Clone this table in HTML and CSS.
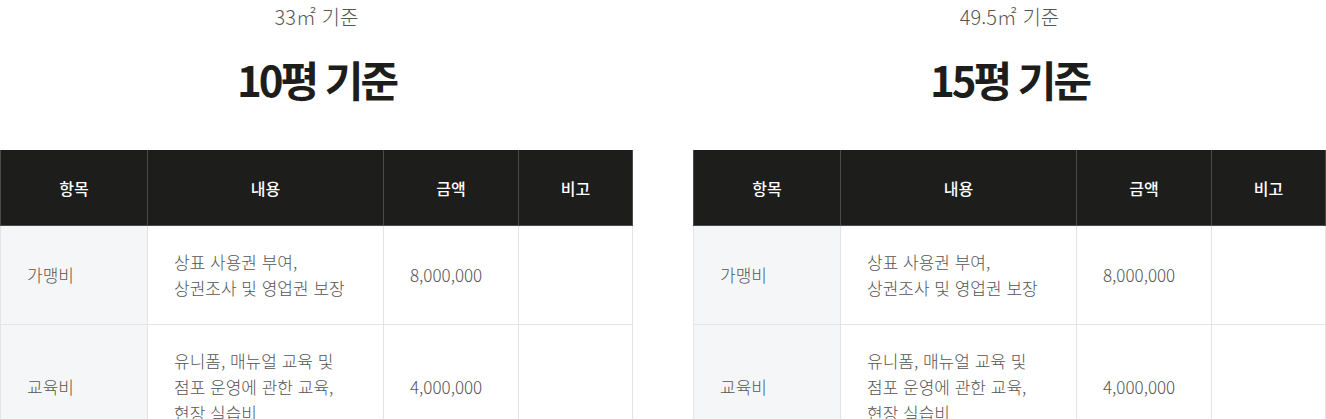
FILE: index.html
```html
<!DOCTYPE html>
<html lang="ko">
<head>
    <meta charset="utf-8">
    <title>창업비용 - 평형별 기준</title>
    <link rel="stylesheet" href="styles.css">
</head>
<body>
    <div class="cost-wrap">
        <div class="cost-box">
            <p class="sub">33㎡ 기준</p>
            <h2 class="title">10평 기준</h2>
            <table class="cost-table">
                <colgroup>
                    <col class="c-item"><col class="c-desc"><col class="c-price"><col class="c-note">
                </colgroup>
                <thead>
                    <tr><th>항목</th><th>내용</th><th>금액</th><th>비고</th></tr>
                </thead>
                <tbody>
                    <tr>
                        <td class="item">가맹비</td>
                        <td>상표 사용권 부여,<br>상권조사 및 영업권 보장</td>
                        <td>8,000,000</td>
                        <td></td>
                    </tr>
                    <tr>
                        <td class="item">교육비</td>
                        <td>유니폼, 매뉴얼 교육 및<br>점포 운영에 관한 교육,<br>현장 실습비</td>
                        <td>4,000,000</td>
                        <td></td>
                    </tr>
                </tbody>
            </table>
        </div>

        <div class="cost-box">
            <p class="sub">49.5㎡ 기준</p>
            <h2 class="title">15평 기준</h2>
            <table class="cost-table">
                <colgroup>
                    <col class="c-item"><col class="c-desc"><col class="c-price"><col class="c-note">
                </colgroup>
                <thead>
                    <tr><th>항목</th><th>내용</th><th>금액</th><th>비고</th></tr>
                </thead>
                <tbody>
                    <tr>
                        <td class="item">가맹비</td>
                        <td>상표 사용권 부여,<br>상권조사 및 영업권 보장</td>
                        <td>8,000,000</td>
                        <td></td>
                    </tr>
                    <tr>
                        <td class="item">교육비</td>
                        <td>유니폼, 매뉴얼 교육 및<br>점포 운영에 관한 교육,<br>현장 실습비</td>
                        <td>4,000,000</td>
                        <td></td>
                    </tr>
                </tbody>
            </table>
        </div>
    </div>
</body>
</html>
```

FILE: styles.css
```css
body { margin: 0; background: #fff; font-family: "Noto Sans CJK KR", "Noto Sans", sans-serif; color: #555; }
.cost-wrap { display: grid; grid-template-columns: 1fr 1fr; gap: 60px; }
.cost-box { text-align: center; }
.sub { margin: 0; padding-top: 4px; font-size: 20px; line-height: 26px; font-weight: 300; color: #555; }
.title { margin: 24px 0 0; font-size: 42px; line-height: 50px; font-weight: 700; letter-spacing: -3px; color: #1d1d1b; }
.cost-table { width: 100%; margin-top: 46px; border-collapse: collapse; table-layout: fixed; text-align: left; }
.c-item { width: 147px; }
.c-desc { width: 236px; }
.c-price { width: 135px; }
.cost-table th { height: 75px; padding: 0; background: #1d1d1b; color: #fff; font-size: 16px; font-weight: 500; text-align: center; border: 1px solid #4a4a48; border-top: 0; }
.cost-table td { padding: 23px 26px; font-size: 17px; line-height: 26px; font-weight: 300; color: #555; border: 1px solid #e4e4e4; vertical-align: middle; }
.cost-table td.item { background: #f5f6f8; }
```
